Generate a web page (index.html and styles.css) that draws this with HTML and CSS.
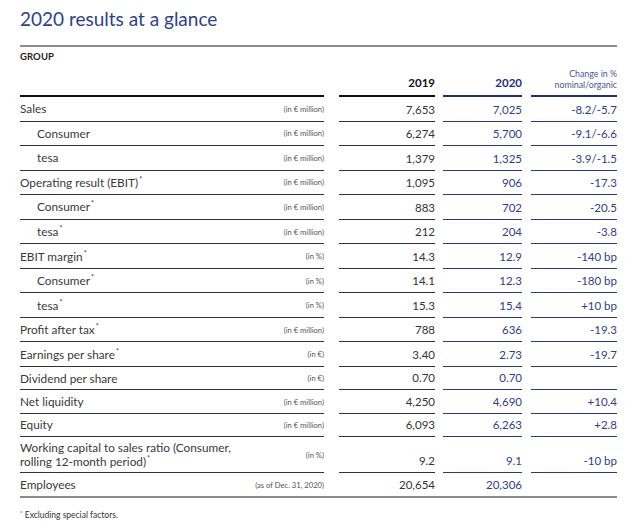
FILE: index.html
```html
<!DOCTYPE html>
<html lang="en">
<head>
<meta charset="utf-8">
<title>2020 results at a glance</title>
<link rel="stylesheet" href="styles.css">
</head>
<body>
<div class="page">
  <h1 class="title">2020 results at a glance</h1>
  <div class="group">GROUP</div>
  <div class="row head">
    <div class="c-label"></div>
    <div class="c-19 yr">2019</div>
    <div class="c-20 yr">2020</div>
    <div class="c-ch chg-head">Change in %<br>nominal/organic</div>
  </div>

  <div class="row">
    <div class="c-label"><span class="lbl">Sales</span><span class="unit">(in € million)</span></div>
    <div class="c-19">7,653</div><div class="c-20">7,025</div><div class="c-ch">-8.2/-5.7</div>
  </div>
  <div class="row">
    <div class="c-label"><span class="lbl sub">Consumer</span><span class="unit">(in € million)</span></div>
    <div class="c-19">6,274</div><div class="c-20">5,700</div><div class="c-ch">-9.1/-6.6</div>
  </div>
  <div class="row">
    <div class="c-label"><span class="lbl sub">tesa</span><span class="unit">(in € million)</span></div>
    <div class="c-19">1,379</div><div class="c-20">1,325</div><div class="c-ch">-3.9/-1.5</div>
  </div>
  <div class="row">
    <div class="c-label"><span class="lbl">Operating result (EBIT)<sup>*</sup></span><span class="unit">(in € million)</span></div>
    <div class="c-19">1,095</div><div class="c-20">906</div><div class="c-ch">-17.3</div>
  </div>
  <div class="row">
    <div class="c-label"><span class="lbl sub">Consumer<sup>*</sup></span><span class="unit">(in € million)</span></div>
    <div class="c-19">883</div><div class="c-20">702</div><div class="c-ch">-20.5</div>
  </div>
  <div class="row">
    <div class="c-label"><span class="lbl sub">tesa<sup>*</sup></span><span class="unit">(in € million)</span></div>
    <div class="c-19">212</div><div class="c-20">204</div><div class="c-ch">-3.8</div>
  </div>
  <div class="row">
    <div class="c-label"><span class="lbl">EBIT margin<sup>*</sup></span><span class="unit">(in %)</span></div>
    <div class="c-19">14.3</div><div class="c-20">12.9</div><div class="c-ch">-140 bp</div>
  </div>
  <div class="row">
    <div class="c-label"><span class="lbl sub">Consumer<sup>*</sup></span><span class="unit">(in %)</span></div>
    <div class="c-19">14.1</div><div class="c-20">12.3</div><div class="c-ch">-180 bp</div>
  </div>
  <div class="row">
    <div class="c-label"><span class="lbl sub">tesa<sup>*</sup></span><span class="unit">(in %)</span></div>
    <div class="c-19">15.3</div><div class="c-20">15.4</div><div class="c-ch">+10 bp</div>
  </div>
  <div class="row">
    <div class="c-label"><span class="lbl">Profit after tax<sup>*</sup></span><span class="unit">(in € million)</span></div>
    <div class="c-19">788</div><div class="c-20">636</div><div class="c-ch">-19.3</div>
  </div>
  <div class="row">
    <div class="c-label"><span class="lbl">Earnings per share<sup>*</sup></span><span class="unit">(in €)</span></div>
    <div class="c-19">3.40</div><div class="c-20">2.73</div><div class="c-ch">-19.7</div>
  </div>
  <div class="row tight">
    <div class="c-label"><span class="lbl">Dividend per share</span><span class="unit">(in €)</span></div>
    <div class="c-19">0.70</div><div class="c-20">0.70</div><div class="c-ch"></div>
  </div>
  <div class="row tight">
    <div class="c-label"><span class="lbl">Net liquidity</span><span class="unit">(in € million)</span></div>
    <div class="c-19">4,250</div><div class="c-20">4,690</div><div class="c-ch">+10.4</div>
  </div>
  <div class="row tight">
    <div class="c-label"><span class="lbl">Equity</span><span class="unit">(in € million)</span></div>
    <div class="c-19">6,093</div><div class="c-20">6,263</div><div class="c-ch">+2.8</div>
  </div>
  <div class="row double">
    <div class="c-label"><span class="lbl">Working capital to sales ratio (Consumer,<br>rolling 12-month period)<sup>*</sup></span><span class="unit">(in %)</span></div>
    <div class="c-19">9.2</div><div class="c-20">9.1</div><div class="c-ch">-10 bp</div>
  </div>
  <div class="row last">
    <div class="c-label"><span class="lbl">Employees</span><span class="unit">(as of Dec. 31, 2020)</span></div>
    <div class="c-19">20,654</div><div class="c-20">20,306</div><div class="c-ch"></div>
  </div>

  <p class="note"><sup>*</sup> Excluding special factors.</p>
</div>
</body>
</html>
```

FILE: styles.css
```css
html, body {
  margin: 0;
  padding: 0;
  background: #ffffff;
}

.page {
  width: 597px;
  padding: 0 0 0 20px;
  font-family: Lato, "Open Sans", "Noto Sans", sans-serif;
  color: #3a3a3a;
}

.title {
  margin: 0;
  height: 47px;
  box-sizing: border-box;
  padding-top: 6px;
  font-size: 19px;
  line-height: 26px;
  font-weight: 400;
  color: #2c3f8e;
  border-bottom: 2px solid #8c8c8c;
}

.group {
  padding-top: 4px;
  font-size: 9.5px;
  line-height: 12px;
  font-weight: 700;
  color: #1e1e1e;
  letter-spacing: 0.1px;
}

.row {
  display: flex;
  height: 24.55px;
}

.row.tight {
  height: 23.4px;
}

.row.double {
  height: 36px;
}

.row.last {
  height: 23px;
  border-bottom: 2px solid #8a8a8a;
}

.row > div {
  box-sizing: border-box;
  border-bottom: 1px solid #333333;
}

.row.last > div {
  border-bottom: none;
}

.c-label {
  width: 304px;
  display: flex;
  justify-content: space-between;
  align-items: center;
  padding-top: 1px;
}

.c-19, .c-20, .c-ch {
  display: flex;
  justify-content: flex-end;
  align-items: flex-end;
  padding-bottom: 5px;
  font-size: 11.5px;
  line-height: 13px;
  text-align: right;
}

.c-19 {
  width: 96px;
  margin-left: 15px;
  color: #333333;
}

.c-20 {
  width: 79px;
  margin-left: 8px;
  color: #2f3d8c;
}

.c-ch {
  width: 86px;
  margin-left: 9px;
  color: #2f3d8c;
}

.row > .c-20, .row > .c-ch {
  border-bottom-color: #2a3888;
}

.row.last > .c-ch {
  border-bottom: none;
}

.lbl {
  font-size: 11.8px;
  line-height: 14px;
  color: #3a3a3a;
}

.lbl.sub {
  padding-left: 17px;
}

.lbl sup {
  font-size: 7px;
  line-height: 0;
  vertical-align: 5px;
  margin-left: 1px;
}

.unit {
  font-size: 7.6px;
  line-height: 9px;
  color: #555555;
  white-space: nowrap;
}

.head {
  height: 34px;
}

.head > div {
  border-bottom: 2px solid #111111;
}

.head > .c-20, .head > .c-ch {
  border-bottom-color: #1f2d80;
}

.yr {
  font-weight: 700;
  font-size: 11.5px;
  padding-bottom: 6px;
}

.c-19.yr {
  color: #111111;
}

.c-20.yr {
  color: #1f2d80;
}

.chg-head {
  font-size: 8.8px;
  line-height: 10.5px;
  color: #4a5699;
  padding-bottom: 5px;
}

.note {
  margin: 12px 0 0 0;
  font-size: 8.5px;
  line-height: 10px;
  color: #333333;
}

.note sup {
  font-size: 6px;
  line-height: 0;
  vertical-align: 3px;
}
```
